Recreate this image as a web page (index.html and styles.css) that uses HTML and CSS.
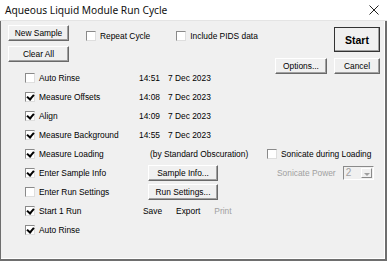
FILE: index.html
```html
<!doctype html>
<html lang="en">
<head>
    <meta charset="UTF-8">
    <title>Aqueous Liquid Module Run Cycle</title>
    <link rel="stylesheet" href="styles.css">
</head>
<body>
<div class="window">
    <div class="titlebar">
        <span class="title">Aqueous Liquid Module Run Cycle</span>
        <svg class="close" width="10" height="10" viewBox="0 0 10 10">
            <path d="M0.5 0.5 L9.5 9.5 M9.5 0.5 L0.5 9.5" stroke="#222" stroke-width="1" fill="none"/>
        </svg>
    </div>
    <div class="client">
        <div class="top">
            <div class="actions">
                <button class="btn wide">New Sample</button>
                <button class="btn wide">Clear All</button>
            </div>
            <div class="flags">
                <label class="check"><span class="box"></span>Repeat Cycle</label>
                <label class="check"><span class="box"></span>Include PIDS data</label>
            </div>
            <button class="btn options">Options...</button>
            <div class="run">
                <button class="btn start">Start</button>
                <button class="btn cancel">Cancel</button>
            </div>
        </div>

        <div class="steps">
            <label class="check"><span class="box"></span>Auto Rinse</label>
            <div class="stamp"><span class="time">14:51</span>7 Dec 2023</div>
            <div></div>

            <label class="check"><span class="box on"></span>Measure Offsets</label>
            <div class="stamp"><span class="time">14:08</span>7 Dec 2023</div>
            <div></div>

            <label class="check"><span class="box on"></span>Align</label>
            <div class="stamp"><span class="time">14:09</span>7 Dec 2023</div>
            <div></div>

            <label class="check"><span class="box on"></span>Measure Background</label>
            <div class="stamp"><span class="time">14:55</span>7 Dec 2023</div>
            <div></div>

            <label class="check"><span class="box on"></span>Measure Loading</label>
            <div class="note">(by Standard Obscuration)</div>
            <label class="check"><span class="box"></span>Sonicate during Loading</label>

            <label class="check"><span class="box on"></span>Enter Sample Info</label>
            <div class="cell"><button class="btn info">Sample Info...</button></div>
            <div class="power">
                <span class="muted">Sonicate Power</span>
                <div class="combo"><span class="value">2</span><span class="drop"></span></div>
            </div>

            <label class="check"><span class="box"></span>Enter Run Settings</label>
            <div class="cell"><button class="btn info">Run Settings...</button></div>
            <div></div>

            <label class="check"><span class="box on"></span>Start 1 Run</label>
            <div class="links"><span>Save</span><span>Export</span><span class="muted">Print</span></div>
            <div></div>

            <label class="check"><span class="box on"></span>Auto Rinse</label>
            <div></div>
            <div></div>
        </div>
    </div>
</div>
</body>
</html>
```

FILE: styles.css
```css
* {
    margin: 0;
    padding: 0;
    box-sizing: border-box;
}

body {
    background-color: #f0f0f0;
    font-family: "Liberation Sans", Arial, sans-serif;
    font-size: 8.4px;
    color: #000;
}

.window {
    width: 387px;
    height: 261px;
    display: flex;
    flex-direction: column;
    background-color: #f0f0f0;
}

.titlebar {
    height: 21px;
    background-color: #fff;
    border-bottom: 1px solid #e4e4e4;
    display: flex;
    align-items: center;
    justify-content: space-between;
    padding: 0 8px 0 5px;
}

.title {
    font-family: "Noto Sans", sans-serif;
    font-size: 10.2px;
    color: #111;
}

.close {
    display: block;
}

.client {
    flex: 1;
    border-left: 1px solid #6e6e6e;
    border-right: 2px solid #6e6e6e;
    border-bottom: 2px solid #6e6e6e;
    box-shadow: inset -1px -1px #fff;
}

/* top bar */
.top {
    display: flex;
    align-items: flex-start;
    padding: 4px 5px 0 7px;
}

.actions {
    display: flex;
    flex-direction: column;
    gap: 5px;
}

.flags {
    flex: 1;
    display: flex;
    gap: 26px;
    margin: 6px 0 0 17px;
}

.run {
    display: flex;
    flex-direction: column;
    gap: 6px;
    margin: 2px 0 0 7px;
}

.btn {
    font-family: inherit;
    font-size: inherit;
    color: #000;
    background-color: #f0f0f0;
    border: 1px solid;
    border-color: #fff #696969 #696969 #fff;
    box-shadow: inset -1px -1px #a0a0a0;
    height: 16px;
    padding: 0;
}

.wide {
    width: 61px;
}

.options {
    width: 52px;
    align-self: flex-end;
}

.start {
    width: 46px;
    height: 25px;
    font-weight: bold;
    font-size: 10.5px;
    outline: 1px solid #333;
    outline-offset: -1px;
    border-color: #fff #333 #333 #fff;
}

.cancel {
    width: 46px;
}

/* step list */
.steps {
    display: grid;
    grid-template-columns: 114px 128px 1fr;
    grid-auto-rows: 19px;
    align-items: center;
    margin-top: -6px;
    padding-left: 24px;
}

.check {
    display: flex;
    align-items: center;
    gap: 4px;
    white-space: nowrap;
}

.box {
    width: 10px;
    height: 10px;
    flex: none;
    background-color: #fff;
    border: 1px solid;
    border-color: #8a8a8a #dedede #dedede #8a8a8a;
    position: relative;
}

.box.on::after {
    content: "";
    position: absolute;
    left: 2px;
    top: 0;
    width: 3px;
    height: 5px;
    border: solid #000;
    border-width: 0 2px 2px 0;
    transform: rotate(40deg);
}

.stamp {
    display: flex;
}

.time {
    width: 29px;
}

.note {
    padding-left: 11px;
}

.cell {
    padding-left: 9px;
}

.info {
    width: 70px;
}

.links {
    display: flex;
    gap: 14px;
    padding-left: 4px;
}

.muted {
    color: #a0a0a0;
}

.power {
    display: flex;
    align-items: center;
    padding-left: 10px;
    gap: 7px;
}

.combo {
    width: 31px;
    height: 14px;
    display: flex;
    background-color: #f0f0f0;
    border: 1px solid;
    border-color: #8a8a8a #fff #fff #8a8a8a;
    padding: 1px;
}

.value {
    flex: 1;
    color: #a0a0a0;
    font-size: 10px;
    line-height: 10px;
    padding-left: 1px;
}

.drop {
    width: 11px;
    border: 1px solid;
    border-color: #fff #8a8a8a #8a8a8a #fff;
    position: relative;
}

.drop::after {
    content: "";
    position: absolute;
    left: 2px;
    top: 4px;
    border: 3px solid transparent;
    border-top-color: #a0a0a0;
    border-bottom: 0;
}
```
